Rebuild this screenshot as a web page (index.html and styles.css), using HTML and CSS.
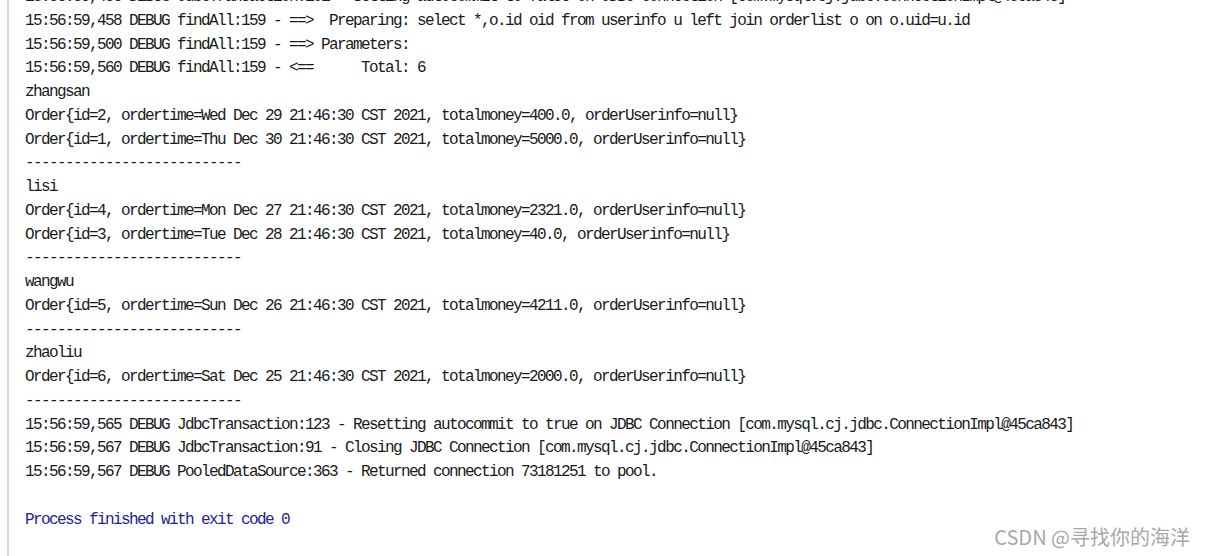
FILE: index.html
```html
<!DOCTYPE html>
<html>
<head>
<meta charset="utf-8">
<link rel="stylesheet" href="styles.css">
</head>
<body>
<div class="console">
<pre class="log">15:56:59,456 DEBUG JdbcTransaction:101 - Setting autocommit to false on JDBC Connection [com.mysql.cj.jdbc.ConnectionImpl@45ca843]
15:56:59,458 DEBUG findAll:159 - ==>  Preparing: select *,o.id oid from userinfo u left join orderlist o on o.uid=u.id
15:56:59,500 DEBUG findAll:159 - ==> Parameters: 
15:56:59,560 DEBUG findAll:159 - &lt;==      Total: 6
zhangsan
Order{id=2, ordertime=Wed Dec 29 21:46:30 CST 2021, totalmoney=400.0, orderUserinfo=null}
Order{id=1, ordertime=Thu Dec 30 21:46:30 CST 2021, totalmoney=5000.0, orderUserinfo=null}
---------------------------
lisi
Order{id=4, ordertime=Mon Dec 27 21:46:30 CST 2021, totalmoney=2321.0, orderUserinfo=null}
Order{id=3, ordertime=Tue Dec 28 21:46:30 CST 2021, totalmoney=40.0, orderUserinfo=null}
---------------------------
wangwu
Order{id=5, ordertime=Sun Dec 26 21:46:30 CST 2021, totalmoney=4211.0, orderUserinfo=null}
---------------------------
zhaoliu
Order{id=6, ordertime=Sat Dec 25 21:46:30 CST 2021, totalmoney=2000.0, orderUserinfo=null}
---------------------------
15:56:59,565 DEBUG JdbcTransaction:123 - Resetting autocommit to true on JDBC Connection [com.mysql.cj.jdbc.ConnectionImpl@45ca843]
15:56:59,567 DEBUG JdbcTransaction:91 - Closing JDBC Connection [com.mysql.cj.jdbc.ConnectionImpl@45ca843]
15:56:59,567 DEBUG PooledDataSource:363 - Returned connection 73181251 to pool.

<span class="sys">Process finished with exit code 0</span></pre>
</div>
<div class="watermark">CSDN @寻找你的海洋</div>
</body>
</html>
```
FILE: styles.css
```css
html, body {
  margin: 0;
  padding: 0;
  background: #ffffff;
  overflow: hidden;
}
body {
  width: 1205px;
  height: 556px;
  position: relative;
}
.console {
  margin-left: 7px;
  height: 556px;
  border-left: 2px solid #cfe3cf;
  padding-left: 16px;
  overflow: hidden;
}
.log {
  margin: -14px 0 0 0;
  font-family: "Liberation Mono", monospace;
  font-size: 16px;
  letter-spacing: -1.6px;
  line-height: 23.75px;
  color: #1a1a1a;
  white-space: pre;
}
.sys {
  color: #23239c;
}
.watermark {
  position: absolute;
  right: 15px;
  bottom: 5px;
  font-family: "Noto Sans CJK SC", "Noto Sans", sans-serif;
  font-size: 20px;
  line-height: 28px;
  color: #a8a8a8;
}
```
